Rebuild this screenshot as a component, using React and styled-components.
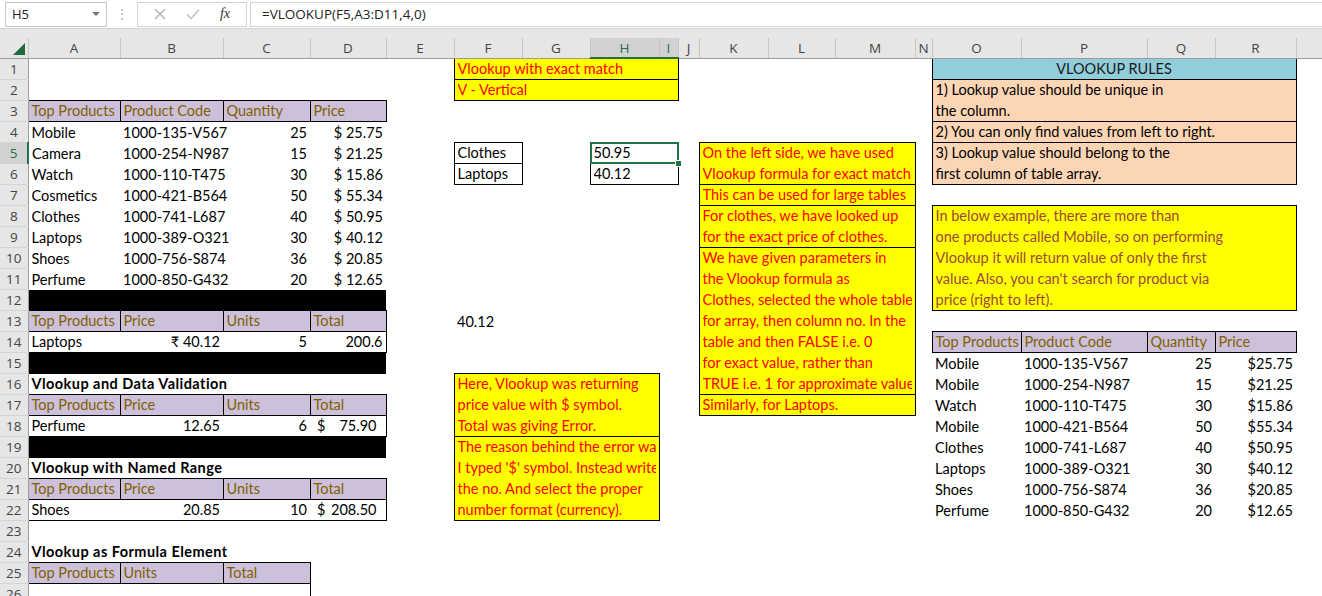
import React from "react";
import styled, { createGlobalStyle } from "styled-components";

const cellFont = `"Lato", "Liberation Sans", sans-serif`;
const uiFont = `"Open Sans", "Noto Sans", sans-serif`;
const green = "#217346";
const headerBg = "#e6e6e6";

const colWidths = [28, 92, 103, 87, 76, 68, 68, 68, 69, 19, 21, 69, 67, 80, 17, 89, 126, 68, 81, 26];
const letters = ["", "A", "B", "C", "D", "E", "F", "G", "H", "I", "J", "K", "L", "M", "N", "O", "P", "Q", "R", ""];
const ROWS = 26;
const ROW_H = 21;

const products = [
  ["Mobile", "1000-135-V567", 25, "25.75"],
  ["Camera", "1000-254-N987", 15, "21.25"],
  ["Watch", "1000-110-T475", 30, "15.86"],
  ["Cosmetics", "1000-421-B564", 50, "55.34"],
  ["Clothes", "1000-741-L687", 40, "50.95"],
  ["Laptops", "1000-389-O321", 30, "40.12"],
  ["Shoes", "1000-756-S874", 36, "20.85"],
  ["Perfume", "1000-850-G432", 20, "12.65"],
];

const lookupRows = [
  ["Mobile", "1000-135-V567", 25, "25.75"],
  ["Mobile", "1000-254-N987", 15, "21.25"],
  ["Watch", "1000-110-T475", 30, "15.86"],
  ["Mobile", "1000-421-B564", 50, "55.34"],
  ["Clothes", "1000-741-L687", 40, "50.95"],
  ["Laptops", "1000-389-O321", 30, "40.12"],
  ["Shoes", "1000-756-S874", 36, "20.85"],
  ["Perfume", "1000-850-G432", 20, "12.65"],
];

const head = (r, c, labels) =>
  labels.map((t, i) => ({ r, c: c + i, k: "head", t, b: "lrtb" }));

const cells = [
  { r: 1, c: 6, cs: 4, k: "note", t: "Vlookup with exact match", b: "lrtb" },
  { r: 2, c: 6, cs: 4, k: "note", t: "V - Vertical", b: "lrtb" },
  { r: 1, c: 15, cs: 4, k: "title", t: "VLOOKUP RULES", a: "center", b: "lrtb" },
  { r: 2, c: 15, cs: 4, rs: 2, k: "rule", t: "1) Lookup value should be unique in\nthe column.", b: "lrtb" },
  { r: 4, c: 15, cs: 4, k: "rule", t: "2) You can only find values from left to right.", b: "lrtb" },
  { r: 5, c: 15, cs: 4, rs: 2, k: "rule", t: "3) Lookup value should belong to the\nfirst column of table array.", b: "lrtb" },
  {
    r: 8, c: 15, cs: 4, rs: 5, k: "info", b: "lrtb",
    t: "In below example, there are more than\none products called Mobile, so on performing\nVlookup it will return value of only the first\nvalue. Also, you can't search for product via\nprice (right to left).",
  },
  ...head(3, 1, ["Top Products", "Product Code", "Quantity", "Price"]),
  ...products.flatMap(([name, code, qty, price], i) => [
    { r: 4 + i, c: 1, t: name },
    { r: 4 + i, c: 2, t: code },
    { r: 4 + i, c: 3, t: String(qty), a: "right" },
    { r: 4 + i, c: 4, t: "$ " + price, a: "right" },
  ]),
  { r: 5, c: 6, t: "Clothes", b: "lrtb" },
  { r: 6, c: 6, t: "Laptops", b: "lrtb" },
  { r: 5, c: 8, cs: 2, k: "sel", t: "50.95", b: "lrtb" },
  { r: 6, c: 8, cs: 2, t: "40.12", b: "lrtb" },
  { r: 5, c: 11, cs: 3, rs: 2, k: "note", b: "lrtb", t: "On the left side, we have used\nVlookup formula for exact match." },
  { r: 7, c: 11, cs: 3, k: "note", b: "lrtb", t: "This can be used for large tables" },
  { r: 8, c: 11, cs: 3, rs: 2, k: "note", b: "lrtb", t: "For clothes, we have looked up\nfor the exact price of clothes." },
  {
    r: 10, c: 11, cs: 3, rs: 7, k: "note", b: "lrtb",
    t: "We have given parameters in\nthe Vlookup formula as\nClothes, selected the whole table\nfor array, then column no. In the\ntable and then FALSE i.e. 0\nfor exact value, rather than\nTRUE i.e. 1 for approximate value",
  },
  { r: 17, c: 11, cs: 3, k: "note", b: "lrtb", t: "Similarly, for Laptops." },
  { r: 12, c: 1, cs: 4, k: "bar" },
  ...head(13, 1, ["Top Products", "Price", "Units", "Total"]),
  { r: 13, c: 6, t: "40.12" },
  { r: 14, c: 1, t: "Laptops", b: "lb" },
  { r: 14, c: 2, t: "₹ 40.12", a: "right", b: "b" },
  { r: 14, c: 3, t: "5", a: "right", b: "b" },
  { r: 14, c: 4, t: "200.6", a: "right", b: "rb" },
  ...head(14, 15, ["Top Products", "Product Code", "Quantity", "Price"]),
  ...lookupRows.flatMap(([name, code, qty, price], i) => [
    { r: 15 + i, c: 15, t: name },
    { r: 15 + i, c: 16, t: code },
    { r: 15 + i, c: 17, t: String(qty), a: "right" },
    { r: 15 + i, c: 18, t: "$" + price, a: "right" },
  ]),
  { r: 15, c: 1, cs: 4, k: "bar" },
  { r: 16, c: 1, t: "Vlookup and Data Validation", bold: true },
  {
    r: 16, c: 6, cs: 3, rs: 3, k: "note", b: "lrtb",
    t: "Here, Vlookup was returning\nprice value with $ symbol.\nTotal was giving Error.",
  },
  ...head(17, 1, ["Top Products", "Price", "Units", "Total"]),
  { r: 18, c: 1, t: "Perfume", b: "lb" },
  { r: 18, c: 2, t: "12.65", a: "right", b: "b" },
  { r: 18, c: 3, t: "6", a: "right", b: "b" },
  { r: 18, c: 4, acct: "75.90", b: "rb" },
  { r: 19, c: 1, cs: 4, k: "bar" },
  {
    r: 19, c: 6, cs: 3, rs: 4, k: "note", b: "lrtb",
    t: "The reason behind the error was\nI typed '$' symbol. Instead write\nthe no. And select the proper\nnumber format (currency).",
  },
  { r: 20, c: 1, t: "Vlookup with Named Range", bold: true },
  ...head(21, 1, ["Top Products", "Price", "Units", "Total"]),
  { r: 22, c: 1, t: "Shoes", b: "lb" },
  { r: 22, c: 2, t: "20.85", a: "right", b: "b" },
  { r: 22, c: 3, t: "10", a: "right", b: "b" },
  { r: 22, c: 4, acct: "208.50", b: "rb" },
  { r: 24, c: 1, t: "Vlookup as Formula Element", bold: true },
  ...head(25, 1, ["Top Products", "Units", "Total"]),
  { r: 26, c: 1, b: "l" },
  { r: 26, c: 3, b: "r" },
];

const GlobalStyle = createGlobalStyle`
  html, body { margin: 0; padding: 0; background: #fff; overflow: hidden; }
  #root { width: 1322px; height: 596px; overflow: hidden; }
`;

const Window = styled.div`
  width: 1322px;
  height: 596px;
  overflow: hidden;
  display: flex;
  flex-direction: column;
  background: #fff;
  & > * { flex-shrink: 0; }
`;

const FormulaBar = styled.div`
  display: flex;
  align-items: center;
  height: 28px;
  padding-left: 5px;
  background: #fff;
  font-family: ${uiFont};
  font-size: 13px;
  color: #222;
`;

const NameBox = styled.div`
  box-sizing: border-box;
  width: 102px;
  height: 25px;
  border: 1px solid #c6c6c6;
  display: flex;
  align-items: center;
  justify-content: space-between;
  padding: 0 6px;
`;

const Caret = styled.span`
  width: 0;
  height: 0;
  border-left: 4px solid transparent;
  border-right: 4px solid transparent;
  border-top: 4px solid #777;
`;

const Grip = styled.div`
  width: 30px;
  text-align: center;
  color: #b5b5b5;
  font-size: 14px;
  line-height: 1;
`;

const EditButtons = styled.div`
  box-sizing: border-box;
  width: 110px;
  height: 25px;
  border: 1px solid #d4d4d4;
  display: flex;
  align-items: center;
  justify-content: space-around;
  padding: 0 6px;
`;

const Fx = styled.span`
  font-family: "Liberation Serif", serif;
  font-style: italic;
  font-size: 14px;
  color: #333;
`;

const FormulaInput = styled.div`
  box-sizing: border-box;
  flex: 1;
  height: 25px;
  margin-left: 3px;
  border: 1px solid #d4d4d4;
  border-right: none;
  display: flex;
  align-items: center;
  padding-left: 11px;
  font-size: 13.5px;
`;

const Strip = styled.div`
  height: 9px;
  background: ${headerBg};
  border-top: 1px solid #d4d4d4;
`;

const SheetTable = styled.table`
  border-collapse: collapse;
  table-layout: fixed;
  width: ${colWidths.reduce((a, b) => a + b, 0)}px;
  font-family: ${cellFont};
  font-size: 14.5px;
  color: #000;
`;

const ColHead = styled.th`
  height: 19px;
  padding: 0;
  background: ${(p) => (p.$active ? "#d2d2d2" : headerBg)};
  color: ${(p) => (p.$active ? green : "#444")};
  font-family: ${uiFont};
  font-weight: 400;
  font-size: 13.5px;
  border-right: 1px solid #c6c6c6;
  border-bottom: ${(p) => (p.$active ? `2px solid ${green}` : "1px solid #9b9b9b")};
  overflow: hidden;
`;

const Corner = styled.th`
  height: 19px;
  padding: 0;
  background: ${headerBg};
  border-right: 1px solid #c6c6c6;
  border-bottom: 1px solid #9b9b9b;
  vertical-align: bottom;
`;

const RowHead = styled.th`
  padding: 0;
  background: ${(p) => (p.$active ? "#d2d2d2" : headerBg)};
  color: ${(p) => (p.$active ? green : "#444")};
  font-family: ${uiFont};
  font-weight: 400;
  font-size: 13.5px;
  text-align: center;
  border-right: ${(p) => (p.$active ? `2px solid ${green}` : "1px solid #9b9b9b")};
  border-bottom: 1px solid #d4d4d4;
`;

const Row = styled.tr`
  height: ${ROW_H}px;
`;

const line = (on) => (on ? "1px solid #000" : "none");

const Cell = styled.td`
  padding: 0 3px;
  height: 20px;
  line-height: 20px;
  white-space: nowrap;
  overflow: visible;
  vertical-align: ${(p) => (p.$merged ? "top" : "bottom")};
  text-align: ${(p) => p.$align || "left"};
  font-weight: ${(p) => (p.$bold ? 700 : 400)};
  letter-spacing: ${(p) => (p.$bold ? "0.45px" : "normal")};
  border-left: ${(p) => line(p.$b.includes("l"))};
  border-right: ${(p) => line(p.$b.includes("r"))};
  border-top: ${(p) => line(p.$b.includes("t"))};
  border-bottom: ${(p) => line(p.$b.includes("b"))};
`;

const Wrap = styled.div`
  height: ${(p) => p.$rows * ROW_H - 1}px;
  line-height: ${ROW_H}px;
  white-space: pre;
  overflow: hidden;
  margin-top: -1px;
`;

const HeadCell = styled(Cell)`
  background: #ccc0da;
  color: #7f6000;
`;

const NoteCell = styled(Cell)`
  background: #ffff00;
  color: #ff0000;
`;

const TitleCell = styled(Cell)`
  background: #92cddc;
  color: #1a1a1a;
`;

const RuleCell = styled(Cell)`
  background: #fcd5b4;
`;

const InfoCell = styled(Cell)`
  background: #ffff00;
  color: #9a4a3c;
`;

const BarCell = styled(Cell)`
  background: #000;
`;

const SelectedCell = styled(Cell)`
  position: relative;
  &::before {
    content: "";
    position: absolute;
    left: -1px;
    top: -1px;
    right: -1px;
    bottom: -1px;
    border: 2px solid ${green};
  }
  &::after {
    content: "";
    position: absolute;
    right: -4px;
    bottom: -4px;
    width: 5px;
    height: 5px;
    background: ${green};
    border: 1px solid #fff;
  }
`;

const Acct = styled.span`
  display: flex;
  justify-content: space-between;
  padding-left: 4px;
  padding-right: 6px;
`;

const kinds = {
  plain: Cell,
  head: HeadCell,
  note: NoteCell,
  title: TitleCell,
  rule: RuleCell,
  info: InfoCell,
  bar: BarCell,
  sel: SelectedCell,
};

const layout = {};
cells.forEach((cell) => {
  const rs = cell.rs || 1;
  const cs = cell.cs || 1;
  for (let i = 0; i < rs; i++) {
    for (let j = 0; j < cs; j++) {
      layout[`${cell.r + i}-${cell.c + j}`] = i === 0 && j === 0 ? cell : "covered";
    }
  }
});

function SheetCell({ cell }) {
  const Comp = kinds[cell.k || "plain"];
  const rs = cell.rs || 1;
  const cs = cell.cs || 1;
  const merged = (rs > 1 || cs > 1) && cell.k !== "bar";
  let content = cell.t;
  if (cell.acct) {
    content = (
      <Acct>
        <span>$</span>
        <span>{cell.acct}</span>
      </Acct>
    );
  } else if (merged) {
    content = <Wrap $rows={rs}>{cell.t}</Wrap>;
  }
  return (
    <Comp
      colSpan={cs}
      rowSpan={rs}
      $align={cell.a}
      $bold={cell.bold}
      $b={cell.b || ""}
      $merged={merged}
    >
      {content}
    </Comp>
  );
}

function SheetRow({ r }) {
  const tds = [];
  for (let c = 1; c < colWidths.length; c++) {
    const entry = layout[`${r}-${c}`];
    if (entry === "covered") continue;
    if (entry) tds.push(<SheetCell key={c} cell={entry} />);
    else tds.push(<Cell key={c} $b="" />);
  }
  return (
    <Row>
      <RowHead $active={r === 5}>{r}</RowHead>
      {tds}
    </Row>
  );
}

const CrossIcon = () => (
  <svg width="12" height="12" viewBox="0 0 12 12">
    <path d="M1 1L11 11M11 1L1 11" stroke="#b0b0b0" strokeWidth="1.3" fill="none" />
  </svg>
);

const CheckIcon = () => (
  <svg width="14" height="12" viewBox="0 0 14 12">
    <path d="M1 6.5L5 10.5L13 1.5" stroke="#c4c4c4" strokeWidth="1.6" fill="none" />
  </svg>
);

const CornerMark = () => (
  <svg width="12" height="12" viewBox="0 0 12 12" style={{ display: "block", marginLeft: "auto", marginRight: "3px", marginBottom: "3px" }}>
    <path d="M12 0L12 12L0 12Z" fill="#1f6b3d" />
  </svg>
);

function App() {
  const rows = [];
  for (let r = 1; r <= ROWS; r++) rows.push(<SheetRow key={r} r={r} />);
  return (
    <Window>
      <GlobalStyle />
      <FormulaBar>
        <NameBox>
          <span>H5</span>
          <Caret />
        </NameBox>
        <Grip>⋮</Grip>
        <EditButtons>
          <CrossIcon />
          <CheckIcon />
          <Fx>fx</Fx>
        </EditButtons>
        <FormulaInput>=VLOOKUP(F5,A3:D11,4,0)</FormulaInput>
      </FormulaBar>
      <Strip />
      <SheetTable>
        <colgroup>
          {colWidths.map((w, i) => (
            <col key={i} style={{ width: w }} />
          ))}
        </colgroup>
        <thead>
          <tr>
            <Corner>
              <CornerMark />
            </Corner>
            {letters.slice(1).map((l, i) => (
              <ColHead key={i} $active={l === "H" || l === "I"}>
                {l}
              </ColHead>
            ))}
          </tr>
        </thead>
        <tbody>{rows}</tbody>
      </SheetTable>
    </Window>
  );
}

export default App;
